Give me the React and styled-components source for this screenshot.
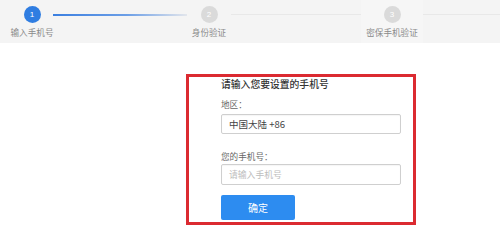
import React from "react";
import styled, { createGlobalStyle } from "styled-components";

const Global = createGlobalStyle`
  html, body { margin: 0; padding: 0; background: #ffffff; }
  body { font-family: "Noto Sans CJK SC", "Noto Sans", sans-serif; width: 500px; height: 247px; overflow: hidden; }
`;

const Header = styled.div`
  height: 43px;
  background: #f4f4f4;
  display: flex;
  align-items: flex-start;
  padding-left: 8px;
  box-sizing: border-box;
`;

const Step = styled.div`
  width: ${(p) => p.$w}px;
  flex: none;
  display: flex;
  flex-direction: column;
  align-items: center;
  padding-top: 6px;
  background: ${(p) => (p.$lift ? "#f6f6f6" : "transparent")};
  height: 43px;
  box-sizing: border-box;
`;

const Circle = styled.div`
  width: 17px;
  height: 17px;
  border-radius: 50%;
  background: ${(p) => (p.$active ? "#2f7de1" : "#dadada")};
  color: #ffffff;
  font-size: 8px;
  line-height: 17px;
  text-align: center;
  font-family: "Liberation Sans", Arial, sans-serif;
`;

const StepLabel = styled.div`
  margin-top: 3px;
  font-size: 8.6px;
  line-height: 12px;
  color: #8a8a8a;
  white-space: nowrap;
`;

const Connector = styled.div`
  flex: ${(p) => (p.$w ? "none" : "1")};
  width: ${(p) => (p.$w ? `${p.$w}px` : "auto")};
  height: ${(p) => (p.$done ? 2 : 1)}px;
  margin-top: 14px;
  margin-left: ${(p) => p.$ml || 0}px;
  background: ${(p) =>
    p.$done
      ? "linear-gradient(to right, #3b7fe0 0%, #6b9ee6 55%, #e3e6ec 100%)"
      : "#e8e8e8"};
`;

const Main = styled.div`
  padding-top: 31px;
  padding-left: 186px;
`;

const Box = styled.div`
  width: 230px;
  height: 151px;
  box-sizing: border-box;
  border: 3px solid #db2a31;
  padding: 1px 12px 0 32px;
  display: flex;
  flex-direction: column;
  align-items: flex-start;
`;

const Title = styled.div`
  font-size: 9.8px;
  line-height: 12px;
  color: #333333;
  font-weight: 500;
`;

const Label = styled.div`
  font-size: 8.6px;
  line-height: 12px;
  color: #666666;
  margin-top: ${(p) => p.$mt}px;
`;

const Input = styled.div`
  width: 180px;
  height: ${(p) => p.$h}px;
  box-sizing: border-box;
  border: 1px solid #cfcfcf;
  border-radius: 2px;
  margin-top: ${(p) => p.$mt}px;
  padding-left: 7px;
  display: flex;
  align-items: center;
  font-size: ${(p) => (p.$placeholder ? 8.8 : 9.5)}px;
  color: ${(p) => (p.$placeholder ? "#bdbdbd" : "#444444")};
  box-shadow: inset 0 1px 1px rgba(0, 0, 0, 0.04);
`;

const Button = styled.div`
  width: 74px;
  height: 25px;
  margin-top: 10px;
  background: #2d8cf0;
  border-radius: 2px;
  color: #ffffff;
  font-size: 10px;
  display: flex;
  align-items: center;
  justify-content: center;
`;

export default function App() {
  return (
    <>
      <Global />
      <Header>
        <Step $w={48}>
          <Circle $active>1</Circle>
          <StepLabel>输入手机号</StepLabel>
        </Step>
        <Connector $done $w={134} $ml={-3} />
        <Step $w={44}>
          <Circle>2</Circle>
          <StepLabel>身份验证</StepLabel>
        </Step>
        <Connector $w={130} />
        <Step $w={62} $lift>
          <Circle>3</Circle>
          <StepLabel>密保手机验证</StepLabel>
        </Step>
        <Connector />
      </Header>
      <Main>
        <Box>
          <Title>请输入您要设置的手机号</Title>
          <Label $mt={8}>地区：</Label>
          <Input $h={20} $mt={4}>中国大陆 +86</Input>
          <Label $mt={16}>您的手机号：</Label>
          <Input $h={21} $mt={2} $placeholder>请输入手机号</Input>
          <Button>确定</Button>
        </Box>
      </Main>
    </>
  );
}
